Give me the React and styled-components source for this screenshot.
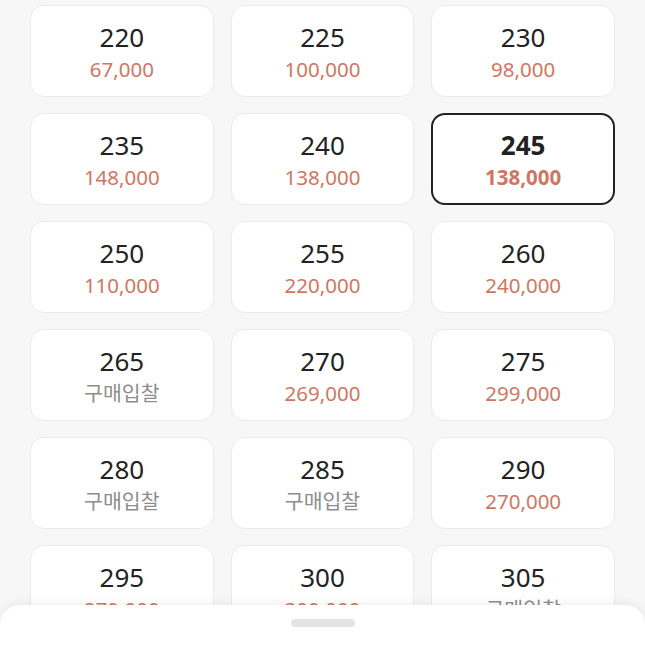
import React, { useState } from 'react';
import styled, { createGlobalStyle } from "styled-components";

const GlobalStyle = createGlobalStyle`
  html, body {
    margin: 0;
    padding: 0;
    background: #f7f7f7;
    font-family: "Noto Sans", "Noto Sans CJK KR", sans-serif;
  }
`;

const Page = styled.div`
  width: 645px;
  height: 645px;
  overflow: hidden;
  position: relative;
  background: #f7f7f7;
`;

const SizeGrid = styled.div`
  display: grid;
  grid-template-columns: repeat(3, 1fr);
  column-gap: 17px;
  row-gap: 16px;
  padding: 5px 30px 0 30px;
`;

const SizeCard = styled.div`
  height: 92px;
  box-sizing: border-box;
  display: flex;
  flex-direction: column;
  align-items: center;
  justify-content: center;
  padding-top: 2px;
  background: #fff;
  border-radius: 14px;
  border: ${(props) => (props.selected ? "2px solid #222" : "1px solid #ebebeb")};
  cursor: pointer;
`;

const SizeText = styled.div`
  font-size: 26px;
  line-height: 30px;
  color: #222;
  font-weight: ${(props) => (props.selected ? 700 : 400)};
`;

const PriceText = styled.div`
  font-size: 20.5px;
  line-height: 26px;
  margin-top: 4px;
  color: ${(props) => (props.bid ? "#8d8d8d" : "#cf7662")};
  font-weight: ${(props) => (props.selected ? 700 : 400)};
`;

const BottomSheet = styled.div`
  position: absolute;
  left: 0;
  right: 0;
  bottom: 0;
  height: 40px;
  background: #fff;
  border-radius: 20px 20px 0 0;
  box-shadow: 0 -3px 10px rgba(0, 0, 0, 0.05);
  display: flex;
  justify-content: center;
`;

const Handle = styled.div`
  width: 64px;
  height: 8px;
  margin-top: 14px;
  border-radius: 4px;
  background: #e3e3e3;
`;

const sizes = [
  { size: 220, price: "67,000" },
  { size: 225, price: "100,000" },
  { size: 230, price: "98,000" },
  { size: 235, price: "148,000" },
  { size: 240, price: "138,000" },
  { size: 245, price: "138,000" },
  { size: 250, price: "110,000" },
  { size: 255, price: "220,000" },
  { size: 260, price: "240,000" },
  { size: 265, price: null },
  { size: 270, price: "269,000" },
  { size: 275, price: "299,000" },
  { size: 280, price: null },
  { size: 285, price: null },
  { size: 290, price: "270,000" },
  { size: 295, price: "279,000" },
  { size: 300, price: "300,000" },
  { size: 305, price: null },
];

function App() {
  const [selected, setSelected] = useState(245);

  return (
    <Page>
      <GlobalStyle />
      <SizeGrid>
        {sizes.map((s) => (
          <SizeCard key={s.size} selected={selected === s.size} onClick={() => setSelected(s.size)}>
            <SizeText selected={selected === s.size}>{s.size}</SizeText>
            <PriceText bid={!s.price} selected={selected === s.size}>
              {s.price ? s.price : "구매입찰"}
            </PriceText>
          </SizeCard>
        ))}
      </SizeGrid>
      <BottomSheet>
        <Handle />
      </BottomSheet>
    </Page>
  );
}

export default App;
